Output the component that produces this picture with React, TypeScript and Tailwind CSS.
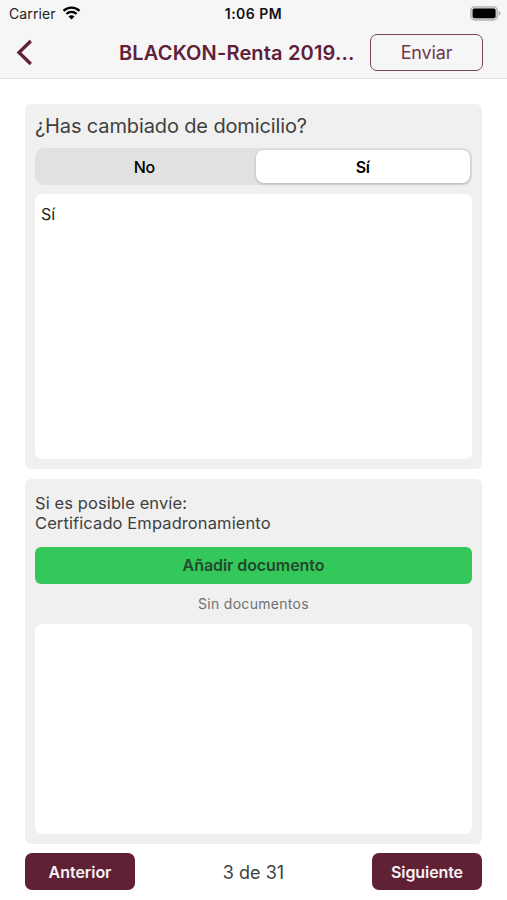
import { useState } from 'react'
import clsx from 'clsx'

const options = ['No', 'Sí']

function WifiIcon() {
  return (
    <svg className="mb-px h-[14px] w-[19px]" viewBox="0 0 18 14" fill="none">
      <path d="M1 4.9a11.4 11.4 0 0 1 16 0" stroke="#000" strokeWidth="2.3" />
      <path d="M3.9 8a7.3 7.3 0 0 1 10.2 0" stroke="#000" strokeWidth="2.2" />
      <path d="M9 13.4 6 10.4a4.2 4.2 0 0 1 6 0z" fill="#000" />
    </svg>
  )
}

function BatteryIcon() {
  return (
    <svg className="h-[15px] w-[31px]" viewBox="0 0 31 15" fill="none">
      <rect x="0.8" y="0.8" width="26.6" height="13.2" rx="4" fill="#d5d4d5" stroke="#b4b3b4" strokeWidth="1.3" />
      <rect x="2.6" y="2.6" width="23" height="9.6" rx="2" fill="#000" />
      <path d="M28.7 5v4.8c1-.4 1.7-1.3 1.7-2.4S29.7 5.4 28.7 5z" fill="#a9a8a9" />
    </svg>
  )
}

function StatusBar() {
  return (
    <div className="grid h-[27px] grid-cols-[1fr_80px_1fr] items-center pl-[9px] pr-[6px]">
      <div className="flex items-center gap-[6px]">
        <span className="text-[14px] tracking-[0.1px] text-[#222]">Carrier</span>
        <WifiIcon />
      </div>
      <span className="-ml-[3px] text-center text-[14px] font-semibold tracking-[0.5px] text-[#111]">
        1:06 PM
      </span>
      <div className="flex justify-end">
        <BatteryIcon />
      </div>
    </div>
  )
}

function Header() {
  return (
    <header className="h-[79px] border-b border-[#e3e2e3] bg-[#f7f6f7]">
      <StatusBar />
      <div className="flex h-[50px] items-center pl-[16px] pr-[24px]">
        <button title="Atrás" className="w-[103px]">
          <svg className="h-[27px] w-[17px]" viewBox="0 0 17 27" fill="none">
            <path d="M14.8 2 3 13.5 14.8 25" stroke="#5f2138" strokeWidth="3.3" />
          </svg>
        </button>
        <h1 className="w-[251px] whitespace-nowrap pt-px text-[20px] font-semibold tracking-[0.16px] text-[#5f2138]">
          BLACKON-Renta 2019...
        </h1>
        <button className="h-[37px] w-[113px] rounded-[7px] border border-[#7b4658] text-[18px] tracking-[-0.15px] text-[#6f384c]">
          Enviar
        </button>
      </div>
    </header>
  )
}

export default function App() {
  const [selected, setSelected] = useState('Sí')

  return (
    <div className="flex h-[900px] w-[507px] flex-col overflow-hidden bg-white font-['Inter',sans-serif] text-[#3f3f3f]">
      <Header />
      <main className="flex flex-col gap-[10px] px-[25px] pt-[25px]">
        <section className="flex h-[365px] flex-col rounded-[6px] bg-[#f0f0f0] px-[10px] pb-[10px]">
          <h2 className="h-[44px] text-[20px] leading-[44px] tracking-[-0.13px]">¿Has cambiado de domicilio?</h2>
          <div className="flex h-[37px] items-center gap-1 rounded-[9px] bg-[#e1e1e1] px-[2px]">
            {options.map((option) => (
              <button
                key={option}
                onClick={() => setSelected(option)}
                className={clsx(
                  'h-[33px] flex-1 rounded-[8px] text-[16px] tracking-[-0.3px] text-black',
                  selected === option
                    ? 'bg-white font-semibold shadow-[0_1px_3px_rgba(0,0,0,0.22)]'
                    : 'font-medium',
                )}
              >
                {option}
              </button>
            ))}
          </div>
          <div className="mt-[9px] flex-1 rounded-[7px] bg-white px-[6px] pt-[9px] text-[16px] leading-[22px] text-[#222]">
            {selected}
          </div>
        </section>

        <section className="flex h-[365px] flex-col rounded-[6px] bg-[#f0f0f0] px-[10px] pb-[10px] pt-[14px]">
          <p className="text-[16.5px] leading-5 tracking-[0.1px]">
            Si es posible envíe:
            <br />
            Certificado Empadronamiento
          </p>
          <button className="mt-[14px] h-[37px] rounded-[6px] bg-[#34c759] pb-px text-[16px] font-semibold tracking-[-0.07px] text-[#224a2d]">
            Añadir documento
          </button>
          <p className="h-[40px] text-center text-[14px] leading-[40px] tracking-[0.3px] text-[#707070]">
            Sin documentos
          </p>
          <div className="flex-1 rounded-[7px] bg-white" />
        </section>
      </main>

      <footer className="mt-[9px] flex items-center justify-between px-[25px]">
        <button className="h-[37px] w-[110px] rounded-[7px] bg-[#612135] text-[16px] font-semibold tracking-[-0.05px] text-[#f8f3f5]">
          Anterior
        </button>
        <span className="pt-px text-[18px] tracking-[0.02px]">3 de 31</span>
        <button className="h-[37px] w-[110px] rounded-[7px] bg-[#612135] text-[16px] font-semibold tracking-[-0.1px] text-[#f8f3f5]">
          Siguiente
        </button>
      </footer>
    </div>
  )
}
